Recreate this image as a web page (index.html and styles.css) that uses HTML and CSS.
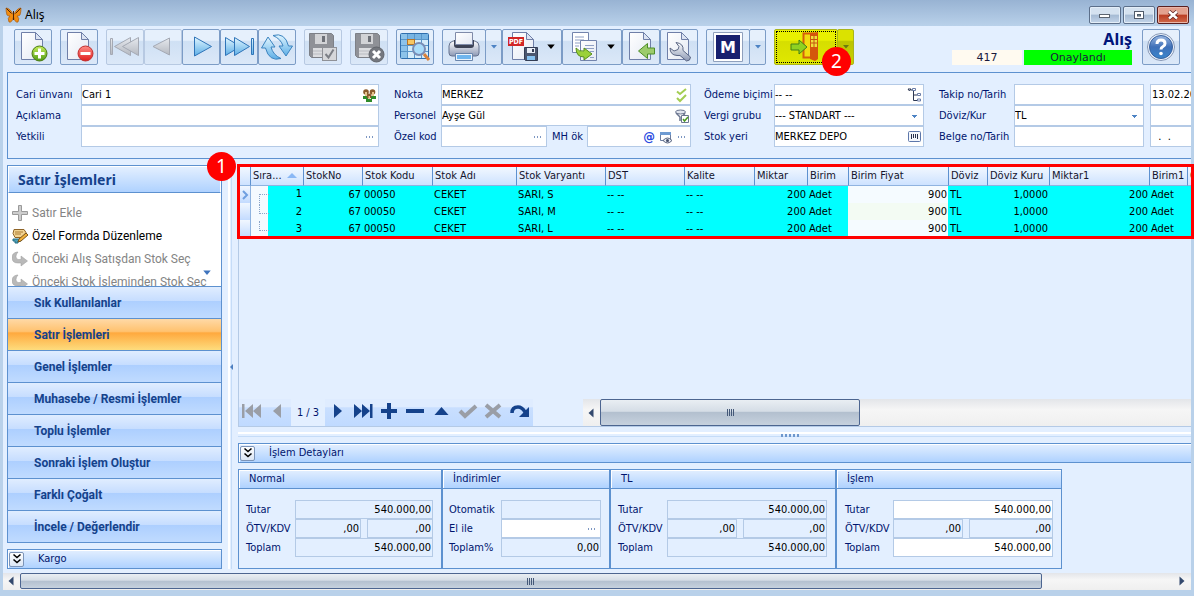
FILE: index.html
```html
<!DOCTYPE html>
<html lang="tr">
<head>
<meta charset="utf-8">
<title>Alış</title>
<link rel="stylesheet" href="styles.css">
</head>
<body>
<svg class="defs" aria-hidden="true">
  <defs>
    <linearGradient id="blue" x1="0" y1="0" x2="0" y2="1"><stop offset="0" stop-color="#e2f6ff"/><stop offset="1" stop-color="#5caee6"/></linearGradient>
    <linearGradient id="gray" x1="0" y1="0" x2="0" y2="1"><stop offset="0" stop-color="#e6e9ee"/><stop offset="1" stop-color="#b4b8c0"/></linearGradient>
    <linearGradient id="paper" x1="0" y1="0" x2="1" y2="1"><stop offset="0" stop-color="#fff"/><stop offset="1" stop-color="#e4e9f3"/></linearGradient>
    <linearGradient id="green" x1="0" y1="0" x2="0" y2="1"><stop offset="0" stop-color="#c6ee5a"/><stop offset="1" stop-color="#4e9a14"/></linearGradient>
    <linearGradient id="red" x1="0" y1="0" x2="0" y2="1"><stop offset="0" stop-color="#ff8d86"/><stop offset="1" stop-color="#e01c1c"/></linearGradient>
    <linearGradient id="steel" x1="0" y1="0" x2="0" y2="1"><stop offset="0" stop-color="#fff"/><stop offset="1" stop-color="#8c98b4"/></linearGradient>
    <linearGradient id="help" x1="0" y1="0" x2="0" y2="1"><stop offset="0" stop-color="#9bb8e2"/><stop offset=".5" stop-color="#3f70b8"/><stop offset="1" stop-color="#3a86cc"/></linearGradient>
    <symbol id="page" viewBox="0 0 32 32"><path d="M4.500 1.500h14l7 7v20h-21z" fill="url(#paper)" stroke="#6f7fa8"/><path d="M18.500 1.500v7h7z" fill="#dbe3f2" stroke="#6f7fa8"/></symbol>
    <symbol id="floppy" viewBox="0 0 32 32"><path d="M2.500 2.500h22l2 2v22h-22l-2-2z" fill="#8f9197" stroke="#7d8087"/><path d="M8 3h12v10H8z" fill="#d2d3d6"/><path d="M15 5h3v6h-3z" fill="#6d7077"/><path d="M6 17h16v9H6z" fill="#dcdde0"/><path d="M6 20h16M6 23h16" stroke="#b9bbc0"/></symbol>
    <symbol id="redo" viewBox="0 0 16 16"><path d="M5 1Q0 2 0 6.500 0 12 6 12h3v3l6.500-5L9 5v3.500H6.500Q4 8.500 4 5.500 4 3 6 1z" fill="#b9b9b9" stroke="#9a9a9a" stroke-width=".5"/></symbol>
    <symbol id="dots" viewBox="0 0 12 16"><path d="M2 7h1v2H2zM5 7h1v2H5zM8 7h1v2H8z" fill="#7d97c2"/></symbol>
    <symbol id="caret" viewBox="0 0 8 8"><path d="M1 2h6L4 5.500z" fill="currentColor"/></symbol>
    <symbol id="chevrons" viewBox="0 0 10 12"><path d="M1.500 1.500L5 4.500l3.500-3M1.500 6.500L5 9.500l3.500-3" fill="none" stroke="#000" stroke-width="1.600"/></symbol>
  </defs>
</svg>

<div class="window">
  <header class="titlebar">
    <svg class="logo" viewBox="0 0 18 16"><path d="M8.500 8Q5 1 1 1q0 4 1 7 1 1 3 1-3 2-1 6 3 1 4.500-5Q10 16 13 15q2-4-1-6 2 0 3-1 1-3 1-7-4 0-7.500 7z" fill="#f28c10" stroke="#a85a10" stroke-width=".7"/><path d="M8.500 4v9M1.500 1.500l5 5M15.500 1.500l-5 5" stroke="#4c2408"/></svg>
    <span class="titlebar-text">Alış</span>
    <div class="window-buttons">
      <button class="win-btn" type="button" aria-label="Simge durumuna küçült"><svg viewBox="0 0 14 12"><rect x="1.500" y="5.500" width="10" height="3" fill="#fff" stroke="#5b6470"/></svg></button>
      <button class="win-btn" type="button" aria-label="Ekranı kapla"><svg viewBox="0 0 14 12"><rect x="2.500" y="2.500" width="9" height="7" fill="#fff" stroke="#4f5a6a"/><rect x="5.500" y="5.500" width="3" height="1.500" fill="#8aa" stroke="#4f5a6a"/></svg></button>
      <button class="win-btn close" type="button" aria-label="Kapat"><svg viewBox="0 0 14 12"><path d="M3 2.500l8 7M11 2.500l-8 7" stroke="#5a2020" stroke-width="4"/><path d="M3 2.500l8 7M11 2.500l-8 7" stroke="#fff" stroke-width="2.500"/></svg></button>
    </div>
  </header>

  <div class="client">
    <div class="toolbar">
      <div class="group"><button class="tool" type="button" aria-label="Yeni"><svg viewBox="0 0 32 32"><use href="#page"/><circle cx="22.500" cy="22.500" r="7.500" fill="url(#green)" stroke="#4a7a14"/><path d="M22.500 17.500v10M17.500 22.500h10" stroke="#fff" stroke-width="3"/></svg></button></div>
      <div class="group"><button class="tool" type="button" aria-label="Sil"><svg viewBox="0 0 32 32"><use href="#page"/><circle cx="22.500" cy="22.500" r="7.500" fill="url(#red)" stroke="#c03030"/><path d="M17.500 22.500h10" stroke="#fff" stroke-width="3"/></svg></button></div>
      <div class="group">
        <button class="tool dim" type="button" aria-label="İlk kayıt"><svg viewBox="0 0 32 32"><g fill="url(#gray)" stroke="#a4a9b4"><path d="M1.500 7.500h2v16h-2z"/><path d="M21.500 6.500v18L5.500 15.500z"/><path d="M29.500 6.500v18L13.500 15.500z"/></g></svg></button>
        <button class="tool dim" type="button" aria-label="Önceki kayıt"><svg viewBox="0 0 32 32"><path d="M22.500 7v17L6 15.500z" fill="url(#gray)" stroke="#a4a9b4"/></svg></button>
        <button class="tool" type="button" aria-label="Sonraki kayıt"><svg viewBox="0 0 32 32"><path d="M9.500 6v19l17-9.500z" fill="url(#blue)" stroke="#2f74b8"/></svg></button>
        <button class="tool" type="button" aria-label="Son kayıt"><svg viewBox="0 0 32 32"><g fill="url(#blue)" stroke="#2f74b8"><path d="M2.500 6.500v18l15-9z"/><path d="M11.500 6.500v18l15-9z"/><path d="M28.500 7.500h2v16h-2z"/></g></svg></button>
        <button class="tool" type="button" aria-label="Yenile"><svg viewBox="0 0 32 32"><g fill="url(#blue)" stroke="#3b83bf"><path d="M12 4.500Q24 1 27.500 15h4l-6.500 10-7-10h4Q20 8 12 4.500z"/><path d="M20 27.500Q8 31 4.500 17h-4L7 6l7 10h-4q2 8 10 11.500z"/></g></svg></button>
      </div>
      <div class="group"><button class="tool dim" type="button" aria-label="Kaydet ve onayla"><svg viewBox="0 0 32 32"><use href="#floppy"/><rect x="15.500" y="16.500" width="14" height="13" fill="#d6d7da" stroke="#8f9197"/><path d="M18.500 23l3 3.500 5-8" fill="none" stroke="#7c7f86" stroke-width="2"/></svg></button></div>
      <div class="group"><button class="tool dim" type="button" aria-label="Kaydet ve kapat"><svg viewBox="0 0 32 32"><use href="#floppy"/><circle cx="23.500" cy="23.500" r="7.500" fill="#74777e" stroke="#62656c"/><path d="M20 20l7 7M27 20l-7 7" stroke="#fff" stroke-width="3"/></svg></button></div>
      <div class="group"><button class="tool" type="button" aria-label="Listele"><svg viewBox="0 0 32 32"><rect x="1.500" y="2.500" width="28" height="25" rx="1" fill="#d5ecfa" stroke="#2f6fae"/><path d="M2 3h27v5H2z" fill="#77b4e3"/><path d="M2 3h6v24H2z" fill="#8cc3ea"/><path d="M8.500 3v24M15.500 3v24M22.500 3v24M2 8.500h27M2 14.500h27M2 20.500h27" stroke="#5a96c9"/><rect x="8.500" y="8.500" width="7" height="5" fill="#f7c763" stroke="#b5742a"/><circle cx="20" cy="18" r="6" fill="#a8dcfb" stroke="#7a8db5" stroke-width="2"/><path d="M25 23l5 6" stroke="#d9823b" stroke-width="3"/></svg></button></div>
      <div class="group">
        <button class="tool wide" type="button" aria-label="Yazdır"><svg viewBox="0 0 32 32"><path d="M1 15q0-4 4-5h22q4 1 4 5v7q0 3-3 3H4q-3 0-3-3z" fill="url(#steel)" stroke="#65728f"/><path d="M6 9h20v5q0 3-3 3H9q-3 0-3-3z" fill="#3d4356"/><path d="M7.500 1.500h17v12h-17z" fill="url(#paper)" stroke="#7f8ba9"/><path d="M7.500 22.500h17v7h-17z" fill="#eaf3fc" stroke="#6a86ad"/><path d="M9 24h14v4H9z" fill="#6fb5ee"/></svg></button>
        <button class="tool drop blue" type="button" aria-label="Yazdır seçenekleri"><svg viewBox="0 0 8 8"><use href="#caret"/></svg></button>
        <button class="tool menu" type="button" aria-label="PDF kaydet"><svg viewBox="0 0 32 32"><use href="#page"/><path d="M0 6h16v9H0z" fill="#d12525"/><text x="1" y="13" class="pdf-text">PDF</text><path d="M16.500 16.500h13v13h-12l-1-1z" fill="#4a566f" stroke="#333d55"/><path d="M19 17h8v5h-8z" fill="#e8edf6"/><path d="M24 18h2v3h-2z" fill="#333d55"/><path d="M19 25h8v4h-8z" fill="#86c1f0"/></svg><svg class="menu-caret" viewBox="0 0 8 8"><use href="#caret"/></svg></button>
        <button class="tool menu" type="button" aria-label="Kopyala"><svg viewBox="0 0 32 32"><path d="M4.500 1.500h16v20h-16z" fill="#fff" stroke="#7384ad"/><path d="M7 6h9M7 9h9M7 12h6M7 15h4" stroke="#8fa0c4"/><path d="M12.500 9.500h16v20h-16z" fill="url(#paper)" stroke="#7384ad"/><path d="M17 14.500h9M17 17.500h9M22 20.500h4M22 26.500h4" stroke="#8fa0c4"/><path d="M8 17q3 4 8 3v-3l8 6-8 6v-3q-8 0-8-9z" fill="#9bd13a" stroke="#568e1c"/></svg><svg class="menu-caret" viewBox="0 0 8 8"><use href="#caret"/></svg></button>
        <button class="tool" type="button" aria-label="İçe aktar"><svg viewBox="0 0 32 32"><use href="#page"/><path d="M29.500 17h-7v-4.500L13.500 20l9 7.500V23h7z" fill="#9ccb6c" stroke="#4d8d28"/></svg></button>
        <button class="tool" type="button" aria-label="Ayarlar"><svg viewBox="0 0 32 32"><use href="#page"/><path d="M13 11.500l3 4-1 3-4 1.500-4-3q0 7 7 7.500h3l6.500 5.500q4 0 4-4L20 19.500q1-7-7-8z" fill="url(#steel)" stroke="#5b6785"/></svg></button>
      </div>
      <div class="group">
        <button class="tool wide" type="button" aria-label="Modül"><svg viewBox="0 0 32 32"><path d="M1.500 1.500h29v29h-29z" fill="#fff" stroke="#8fa0bd"/><path d="M4 4h24v24H4z" fill="#18206e"/><text x="16" y="22" text-anchor="middle" class="m-text">M</text></svg></button>
        <button class="tool drop blue" type="button" aria-label="Modül seçenekleri"><svg viewBox="0 0 8 8"><use href="#caret"/></svg></button>
      </div>
      <div class="group exit">
        <button class="tool exit-btn" type="button" aria-label="Çıkış"><svg viewBox="0 0 32 32"><path d="M13.500 2.500h9v24h-9z" fill="#f2dc10" stroke="#d4600c" stroke-width="2"/><path d="M20 2l8-1v27l-3 2-5-2z" fill="#d4560c"/><path d="M21 5h6v11h-6z" fill="#f0e03c"/><path d="M24 5v11M21 8.500h6M21 12h6" stroke="#c25310"/><path d="M1 13h8V9l8 7-8 7v-4H1z" fill="#8fd222" stroke="#428017"/></svg></button>
        <button class="tool drop exit-drop" type="button" aria-label="Çıkış seçenekleri"><svg viewBox="0 0 8 8"><use href="#caret"/></svg></button>
        <span class="badge badge-exit">2</span>
      </div>
      <div class="status">
        <strong class="status-title">Alış</strong>
        <div class="status-row"><span class="status-no">417</span><span class="status-state">Onaylandı</span></div>
      </div>
      <button class="tool help" type="button" aria-label="Yardım"><svg viewBox="0 0 32 32"><circle cx="16" cy="16" r="13.500" fill="#eef4fc" stroke="#8798b5"/><circle cx="16" cy="16" r="11.500" fill="url(#help)" stroke="#37619f"/><path d="M12 13q0-4 4-4t4 3.500q0 2-2 3t-2 3" fill="none" stroke="#fff" stroke-width="3"/><circle cx="16" cy="22.500" r="1.800" fill="#fff"/></svg></button>
    </div>

    <section class="form">
      <div class="fields col-account">
        <label for="cari">Cari ünvanı</label>
        <div class="field"><input id="cari" value="Cari 1"><button type="button" aria-label="Cari seç"><svg viewBox="0 0 16 16"><path d="M2 9h5v3H2zM10 9h5v3h-5zM5 12h6v3H5z" fill="#2e8b2a"/><g fill="#8a5a2c"><circle cx="5" cy="5" r="2.800"/><circle cx="11.500" cy="5" r="2.800"/><circle cx="8" cy="9" r="2.500"/></g><path d="M4 5h2v4H4zM11 5h2v4h-2zM7.500 9h1.500v3H7.500z" fill="#e6c48d"/></svg></button></div>
        <label for="aciklama">Açıklama</label>
        <div class="field"><input id="aciklama"></div>
        <label for="yetkili">Yetkili</label>
        <div class="field"><input id="yetkili"><button type="button" aria-label="Yetkili seç"><svg class="more" viewBox="0 0 12 16"><use href="#dots"/></svg></button></div>
      </div>
      <div class="fields col-place">
        <label for="nokta">Nokta</label>
        <div class="field"><input id="nokta" value="MERKEZ"><button type="button" aria-label="Nokta seç"><svg viewBox="0 0 16 16"><path d="M4 4.500l3 2.500 6-5M4 11l3 3 6-6" fill="none" stroke="#a3cd52" stroke-width="2"/></svg></button></div>
        <label for="personel">Personel</label>
        <div class="field"><input id="personel" value="Ayşe Gül"><button type="button" aria-label="Personel seç"><svg viewBox="0 0 16 16"><ellipse cx="7.500" cy="4" rx="5" ry="2" fill="#e2e6ef" stroke="#6b7690"/><path d="M3 5l4 4v4M12 5l-2 3" fill="none" stroke="#6b7690" stroke-width="1.500"/><path d="M8.500 7.500h7v7h-7z" fill="#fff" stroke="#6b7690"/><path d="M10 11l1.500 2L15 9" fill="none" stroke="#4b9a22" stroke-width="1.500"/></svg></button></div>
        <label for="ozelkod">Özel kod</label>
        <div class="split">
          <div class="field code"><input id="ozelkod"><button type="button" aria-label="Özel kod seç"><svg class="more" viewBox="0 0 12 16"><use href="#dots"/></svg></button></div>
          <label for="mhok">MH ök</label>
          <div class="field mh"><input id="mhok"><button class="at" type="button">@</button><button type="button" aria-label="Önizle"><svg viewBox="0 0 16 16"><path d="M2.500 3.500h10v8h-10z" fill="#fff" stroke="#6d7ea0"/><path d="M2 3h11v3H2z" fill="#6e9bd2"/><path d="M5 11.500q4.500-5 9 0-4.500 5-9 0z" fill="#e3e8f2" stroke="#59657f"/><circle cx="9.500" cy="11.500" r="1.500" fill="#44506b"/></svg></button><button type="button" aria-label="MH özel kod seç"><svg class="more" viewBox="0 0 12 16"><use href="#dots"/></svg></button></div>
        </div>
      </div>
      <div class="fields col-terms">
        <label for="odeme">Ödeme biçimi</label>
        <div class="field"><input id="odeme" value="-- --"><button type="button" aria-label="Ödeme biçimi seç"><svg viewBox="0 0 16 16"><path d="M2 2h3L3.500 4zM7.500 2v11.500H11M7.500 8H11M7.500 3H5" fill="none" stroke="#2c3752"/><path d="M6.500 1.500h3v2h-3zM11.500 6.500h3v2h-3zM11.500 12h3v2h-3z" fill="#fff" stroke="#6a7da8"/></svg></button></div>
        <label for="vergi">Vergi grubu</label>
        <div class="field"><select id="vergi"><option>--- STANDART ---</option></select></div>
        <label for="stokyeri">Stok yeri</label>
        <div class="field"><input id="stokyeri" value="MERKEZ DEPO"><button type="button" aria-label="Stok yeri seç"><svg viewBox="0 0 16 16"><rect x="2.500" y="2.500" width="12" height="10" rx="1" fill="#f4f7fc" stroke="#5d77ab"/><path d="M5.500 5v5M7.500 5v4M9.500 5v4M11.500 5v5" stroke="#26304c"/></svg></button></div>
      </div>
      <div class="fields col-track">
        <label for="takip">Takip no/Tarih</label>
        <div class="split"><div class="field main"><input id="takip"></div><div class="field"><input aria-label="Takip tarihi" value="13.02.2024" class="date"></div></div>
        <label for="doviz">Döviz/Kur</label>
        <div class="split"><div class="field main"><select id="doviz"><option>TL</option></select></div><div class="field"><input aria-label="Kur"></div></div>
        <label for="belge">Belge no/Tarih</label>
        <div class="split"><div class="field main"><input id="belge"></div><div class="field"><input aria-label="Belge tarihi" value="&nbsp;&nbsp;.&nbsp;&nbsp;." class="date"></div></div>
      </div>
    </section>

    <div class="workspace">
      <aside class="sidebar">
        <div class="sidebar-panel">
          <h2 class="sidebar-title">Satır İşlemleri</h2>
          <div class="actions">
            <button class="action off" type="button"><svg viewBox="0 0 16 16"><path d="M6.500.500h3v6h6v3h-6v6h-3v-6h-6v-3h6z" fill="#cdcdcd" stroke="#9a9a9a"/></svg>Satır Ekle</button>
            <button class="action" type="button"><svg viewBox="0 0 16 16"><path d="M2 1.500h10l2 3-3 5H3l-2-4z" fill="#f2d391" stroke="#8e6427"/><path d="M3 4h8M3 6h6" stroke="#a97a35"/><path d="M1 11h8v2H6v2H3v-2H1z" fill="#4aa0b8" stroke="#246f86"/><path d="M14 5l2 2-7 6-3 1 1-3z" fill="#f3b23a" stroke="#7a541c"/></svg>Özel Formda Düzenleme</button>
            <button class="action off" type="button"><svg viewBox="0 0 16 16"><use href="#redo"/></svg>Önceki Alış Satışdan Stok Seç</button>
            <button class="action off" type="button"><svg viewBox="0 0 16 16"><use href="#redo"/></svg>Önceki Stok İşleminden Stok Seç</button>
            <svg class="scroll-hint" viewBox="0 0 8 8"><use href="#caret"/></svg>
          </div>
          <nav class="nav">
            <button type="button">Sık Kullanılanlar</button>
            <button type="button" class="active">Satır İşlemleri</button>
            <button type="button">Genel İşlemler</button>
            <button type="button">Muhasebe / Resmi İşlemler</button>
            <button type="button">Toplu İşlemler</button>
            <button type="button">Sonraki İşlem Oluştur</button>
            <button type="button">Farklı Çoğalt</button>
            <button type="button">İncele / Değerlendir</button>
          </nav>
          <span class="badge badge-grid">1</span>
        </div>
        <div class="bar"><button class="expand" type="button" aria-label="Kargo bölümünü aç"><svg viewBox="0 0 10 12"><use href="#chevrons"/></svg></button><span>Kargo</span></div>
      </aside>
      <div class="vsplit"><svg viewBox="0 0 4 6"><path d="M4 0v6L1 3z" fill="#4d7fc0"/></svg></div>

      <main class="content">
        <section class="grid">
          <div class="grid-lines">
            <div class="grid-clip">
              <table>
                <colgroup><col class="w-ind"><col class="w-sira"><col class="w-no"><col class="w-kod"><col class="w-adi"><col class="w-var"><col class="w-dst"><col class="w-kal"><col class="w-mik"><col class="w-bir"><col class="w-fiyat"><col class="w-dov"><col class="w-kur"><col class="w-mik1"><col class="w-bir1"><col class="w-last"></colgroup>
                <thead><tr><th></th><th><span class="sorted">Sıra...<svg viewBox="0 0 10 6"><path d="M0 5h10L5 0z" fill="#8ab8f5"/></svg></span></th><th>StokNo</th><th>Stok Kodu</th><th>Stok Adı</th><th>Stok Varyantı</th><th>DST</th><th>Kalite</th><th>Miktar</th><th>Birim</th><th>Birim Fiyat</th><th>Döviz</th><th>Döviz Kuru</th><th>Miktar1</th><th>Birim1</th><th>Ö</th></tr></thead>
                <tbody>
                  <tr><td class="ind"><svg viewBox="0 0 8 10"><path d="M1 1l4 4-4 4" fill="none" stroke="#6f9fe0" stroke-width="2"/></svg></td><td class="tree first n">1</td><td class="n">67</td><td>00050</td><td>CEKET</td><td>SARI, S</td><td>-- --</td><td>-- --</td><td class="n">200</td><td>Adet</td><td class="n price">900</td><td>TL</td><td class="n">1,0000</td><td class="n">200</td><td>Adet</td><td></td></tr>
                  <tr><td class="ind"></td><td class="tree n">2</td><td class="n">67</td><td>00050</td><td>CEKET</td><td>SARI, M</td><td>-- --</td><td>-- --</td><td class="n">200</td><td>Adet</td><td class="n price alt">900</td><td>TL</td><td class="n">1,0000</td><td class="n">200</td><td>Adet</td><td></td></tr>
                  <tr><td class="ind"></td><td class="tree n">3</td><td class="n">67</td><td>00050</td><td>CEKET</td><td>SARI, L</td><td>-- --</td><td>-- --</td><td class="n">200</td><td>Adet</td><td class="n price">900</td><td>TL</td><td class="n">1,0000</td><td class="n">200</td><td>Adet</td><td></td></tr>
                </tbody>
              </table>
            </div>
            <div class="callout-frame"></div>
          </div>
          <div class="grid-foot">
            <div class="pager">
              <button type="button" class="dis" aria-label="İlk"><svg viewBox="0 0 20 16"><path d="M0 1h2.500v14H0zM11 1v14L3 8zM19 1v14L11 8z" fill="currentColor"/></svg></button>
              <button type="button" class="dis" aria-label="Önceki"><svg viewBox="0 0 20 16"><path d="M13 1v14L5 8z" fill="currentColor"/></svg></button>
              <span class="page-no">1 / 3</span>
              <button type="button" aria-label="Sonraki"><svg viewBox="0 0 20 16"><path d="M6 1v14l8-7z" fill="currentColor"/></svg></button>
              <button type="button" aria-label="Son"><svg viewBox="0 0 20 16"><path d="M16 1h2.500v14H16zM0 1v14l8-7zM8 1v14l8-7z" fill="currentColor"/></svg></button>
              <button type="button" aria-label="Ekle"><svg viewBox="0 0 20 16"><path d="M7 0h4v6h6v4h-6v6H7v-6H1V6h6z" fill="currentColor"/></svg></button>
              <button type="button" aria-label="Sil"><svg viewBox="0 0 20 16"><path d="M0 6h18v4H0z" fill="currentColor"/></svg></button>
              <button type="button" aria-label="Düzenle"><svg viewBox="0 0 20 16"><path d="M9.500 4l7 8h-14z" fill="currentColor"/></svg></button>
              <button type="button" class="dis" aria-label="Onayla"><svg viewBox="0 0 20 16"><path d="M2 8l5 5L18 3" fill="none" stroke="currentColor" stroke-width="4"/></svg></button>
              <button type="button" class="dis" aria-label="İptal"><svg viewBox="0 0 20 16"><path d="M2 2l14 12M16 2L2 14" stroke="currentColor" stroke-width="4"/></svg></button>
              <button type="button" aria-label="Yenile"><svg viewBox="0 0 20 16"><path d="M2 10q0-6 6-6 4 0 7 5" fill="none" stroke="currentColor" stroke-width="3.500"/><path d="M19 4v10H9z" fill="currentColor"/></svg></button>
            </div>
            <div class="scrollbar grid-scroll"><svg class="arrow" viewBox="0 0 8 10"><path d="M6.500.500v9L1.500 5z" fill="#33496e"/></svg><div class="thumb"><i></i><i></i><i></i><i></i></div></div>
          </div>
        </section>
        <div class="hsplit"><i></i><i></i><i></i><i></i><i></i></div>
        <div class="bar"><button class="expand" type="button" aria-label="İşlem detaylarını aç"><svg viewBox="0 0 10 12"><use href="#chevrons"/></svg></button><span>İşlem Detayları</span></div>
        <div class="totals">
          <section class="total normal"><h3>Normal</h3><div class="sums">
            <label for="n1">Tutar</label><div><input id="n1" readonly value="540.000,00"></div>
            <label for="n2">ÖTV/KDV</label><div class="pair"><input id="n2" readonly value=",00"><input aria-label="KDV" readonly value=",00"></div>
            <label for="n3">Toplam</label><div><input id="n3" readonly value="540.000,00"></div></div></section>
          <section class="total discounts"><h3>İndirimler</h3><div class="sums">
            <label for="i1">Otomatik</label><div><input id="i1" readonly></div>
            <label for="i2">El ile</label><div class="field small"><input id="i2"><button type="button" aria-label="İndirim seç"><svg class="more" viewBox="0 0 12 16"><use href="#dots"/></svg></button></div>
            <label for="i3">Toplam%</label><div><input id="i3" readonly value="0,00"></div></div></section>
          <section class="total tl"><h3>TL</h3><div class="sums">
            <label for="t1">Tutar</label><div><input id="t1" readonly value="540.000,00"></div>
            <label for="t2">ÖTV/KDV</label><div class="pair"><input id="t2" readonly value=",00"><input aria-label="KDV TL" readonly value=",00"></div>
            <label for="t3">Toplam</label><div><input id="t3" readonly value="540.000,00"></div></div></section>
          <section class="total deal"><h3>İşlem</h3><div class="sums">
            <label for="d1">Tutar</label><div><input id="d1" value="540.000,00"></div>
            <label for="d2">ÖTV/KDV</label><div class="pair"><input id="d2" readonly value=",00"><input aria-label="KDV işlem" readonly value=",00"></div>
            <label for="d3">Toplam</label><div><input id="d3" value="540.000,00"></div></div></section>
        </div>
      </main>
    </div>
    <div class="scrollbar page-scroll"><svg class="arrow" viewBox="0 0 8 10"><path d="M6.500.500v9L1.500 5z" fill="#33496e"/></svg><div class="thumb"><i></i><i></i><i></i><i></i></div><svg class="arrow end" viewBox="0 0 8 10"><path d="M1.500.500v9l5-4.500z" fill="#33496e"/></svg></div>
  </div>
</div>
</body>
</html>
```

FILE: styles.css
```css
* { box-sizing: border-box; }

:root {
  --line: #5d91cf;
  --soft: #b4cae6;
  --face: #e3efff;
  --ink: #00156e;
}

body {
  margin: 0;
  font-family: "DejaVu Sans Condensed", "DejaVu Sans", sans-serif;
  font-size: 11px;
  line-height: 14px;
  color: #000;
  overflow: hidden;
}

button, input, select { font: inherit; color: inherit; }
button { padding: 0; border: 0; background: none; }
svg { display: block; flex: none; }
.defs { position: absolute; width: 0; height: 0; }

.window {
  display: flex;
  flex-direction: column;
  height: 100vh;
  padding: 0 3px 6px;
  background: #b9d1ea;
}

.titlebar {
  display: flex;
  align-items: center;
  flex: none;
  height: 26px;
  margin: 0 -3px;
  padding: 3px 5px 0;
  background: linear-gradient(#98b3d3, #b9d1ea);
}
.logo { width: 18px; height: 16px; }
.titlebar-text { flex: 1; margin-left: 2px; font: 12px/16px "Noto Sans", sans-serif; }
.window-buttons { display: flex; gap: 2px; }
.win-btn {
  display: grid;
  place-items: center;
  width: 32px;
  height: 18px;
  border: 1px solid #5c6f8a;
  border-radius: 2px;
  background: linear-gradient(#d5e2f0 45%, #a5bad3 50%, #c3d5ea);
  box-shadow: inset 0 0 0 1px #e4eef8;
}
.win-btn svg { width: 14px; height: 12px; }
.win-btn.close {
  border-color: #5a1f1f;
  background: linear-gradient(#e3a18f 45%, #bb3c22 50%, #cf6a4c);
  box-shadow: inset 0 0 0 1px #eab7aa;
}

.client {
  display: flex;
  flex: 1;
  flex-direction: column;
  min-height: 0;
  background: var(--face);
}

/* toolbar */
.toolbar { display: flex; gap: 8px; flex: none; padding: 3px 11px 7px; }
.group { display: flex; }
.tool {
  display: flex;
  align-items: center;
  justify-content: center;
  width: 38px;
  height: 36px;
  border: 1px solid #7c9cc6;
  border-radius: 2px;
  background: linear-gradient(#e6f0fc 30%, #cfe0f4 34%, #dbe8f8);
}
.tool svg { width: 32px; height: 32px; }
.tool.dim { border-color: #b7c9e2; }
.tool.wide { width: 44px; margin-right: -1px; }
.tool.drop { width: 17px; }
.tool.drop svg { width: 8px; height: 8px; }
.tool.blue { color: #4d83c4; }
.tool.menu { width: 60px; gap: 6px; }
.tool .menu-caret { width: 10px; height: 10px; }
.pdf-text { font: bold 7px "DejaVu Sans Condensed", sans-serif; fill: #fff; }
.m-text { font: bold 16px "DejaVu Sans", sans-serif; fill: #fff; }
.exit { position: relative; }
.exit .tool { border-color: #a9b51c; background: linear-gradient(#e9f000 30%, #d6de00 34%, #e0e800); }
.exit .exit-btn { width: 64px; outline: 1px dotted #000; outline-offset: -3px; margin-right: -1px; }
.exit .exit-drop { width: 17px; color: #6a7a10; background: linear-gradient(#dbe200 30%, #bcc400 34%, #c8d000); }
.status { display: flex; flex-direction: column; align-items: flex-end; margin-left: auto; }
.status-title { font: bold 16px/21px "Noto Sans", sans-serif; color: #00147a; }
.status-row { display: flex; gap: 2px; line-height: 15px; text-align: center; color: #1a1a3c; font-family: "DejaVu Sans", sans-serif; }
.status-no { width: 70px; background: #fffaf0; }
.status-state { width: 108px; background: #00ff00; }
.help { margin-left: 2px; }

.badge {
  position: absolute;
  z-index: 2;
  width: 29px;
  height: 29px;
  border-radius: 50%;
  background: #f00;
  color: #fff;
  font: 19px/28px "Noto Sans", sans-serif;
  text-align: center;
}
.badge-exit { left: 48px; top: 18px; }
.badge-grid { right: -15px; top: -14px; }

/* document header form */
.form {
  display: flex;
  flex: none;
  margin-left: 4px;
  padding: 11px 0 11px 8px;
  border: 1px solid var(--line);
  border-right: 0;
  color: var(--ink);
  overflow: hidden;
}
.fields { display: grid; grid-auto-rows: 21px; align-items: center; flex: none; }
.col-account { grid-template-columns: 65px minmax(0, 1fr); width: 363px; margin-right: 15px; }
.col-place { grid-template-columns: 47px minmax(0, 1fr); width: 297px; margin-right: 13px; }
.col-terms { grid-template-columns: 70px minmax(0, 1fr); width: 220px; margin-right: 15px; }
.col-track { grid-template-columns: 75px minmax(0, 1fr); flex: 1 0 345px; }
.fields label { white-space: nowrap; }
.field {
  display: flex;
  align-items: center;
  flex: 1;
  min-width: 0;
  height: 21px;
  padding-right: 1px;
  border: 1px solid var(--soft);
  background: #fff;
}
.field input, .field select {
  flex: 1;
  width: 0;
  min-width: 0;
  height: 19px;
  padding: 0;
  border: 0;
  outline: 0;
  background: transparent;
  color: #000;
}
.field select {
  appearance: none;
  background: linear-gradient(#4d83c4, #4d83c4) no-repeat right 5px center / 5px 1px,
    linear-gradient(#4d83c4, #4d83c4) no-repeat right 6px top 10px / 3px 1px,
    linear-gradient(#4d83c4, #4d83c4) no-repeat right 7px top 11px / 1px 1px;
}
.field .date { padding-left: 1px; }
.field button svg { width: 16px; height: 16px; }
.field button .more { width: 12px; margin: 0 1px 0 2px; }
.field button { height: 16px; }
.field .at { width: 18px; font: bold 13px/16px "DejaVu Sans Condensed", sans-serif; color: #2849e0; }
.split { display: flex; align-items: center; }
.split label { margin: 0 5px; width: 30px; }
.field.code { flex: 1; }
.field.mh { flex: none; width: 104px; }
.col-track .split { gap: 6px; }
.field.main { flex: none; width: 130px; }

/* workspace */
.workspace { display: flex; flex: 1; min-height: 0; padding: 6px 0 4px 4px; }
.sidebar { display: flex; flex: none; flex-direction: column; gap: 6px; width: 215px; }
.sidebar-panel { position: relative; display: flex; flex: 1; flex-direction: column; min-height: 0; border: 1px solid var(--line); background: #fff; }
.sidebar-title {
  flex: none;
  margin: 0;
  padding: 0 9px;
  border: 1px solid #fff;
  border-bottom: 1px solid var(--line);
  background: linear-gradient(#e3efff, #afd2ff);
  font: bold 14px/25px "Noto Sans", sans-serif;
  color: #15428b;
}
.actions { position: relative; flex: 1; min-height: 0; overflow: hidden; padding: 8px 4px 0; }
.action { display: flex; align-items: center; gap: 4px; height: 23px; white-space: nowrap; font: 12px/16px Roboto, sans-serif; }
.action svg { width: 16px; height: 16px; }
.action.off { color: #848484; }
.scroll-hint { position: absolute; right: 9px; bottom: 8px; width: 10px; height: 10px; color: #3f74bd; }
.nav { flex: none; }
.nav button {
  display: block;
  width: 100%;
  height: 32px;
  padding-left: 26px;
  border-top: 1px solid var(--line);
  background: linear-gradient(#e0edff, #c6ddff 45%, #adcfff 46%, #c0dbff);
  font: bold 12px/16px Roboto, sans-serif;
  color: #15428b;
  text-align: left;
}
.nav .active { background: linear-gradient(#ffd9a6, #ffc26f 40%, #ffa93e 45%, #fddc7d); }
.bar {
  display: flex;
  align-items: center;
  flex: none;
  gap: 14px;
  height: 20px;
  padding-left: 1px;
  border: 1px solid var(--line);
  background: linear-gradient(#e3efff, #afd2ff);
  box-shadow: inset 1px 1px #fff;
  color: var(--ink);
}
.expand { display: grid; place-items: center; width: 15px; height: 15px; border: 1px solid #7c94b8; border-radius: 2px; background: linear-gradient(#fff, #dbe6f5); }
.expand svg { width: 10px; height: 12px; }
.vsplit { display: flex; align-items: center; justify-content: center; flex: none; width: 4px; margin: 0 6px; border-left: 2px solid #fff; border-right: 1px solid #c5dcf8; }
.vsplit svg { width: 4px; height: 6px; }
.content { display: flex; flex: 1; flex-direction: column; min-width: 0; }
.content .bar { border-right: 0; }

/* line grid */
.grid { display: flex; flex: 1; flex-direction: column; min-height: 0; border: solid var(--soft); border-width: 1px 0 1px 1px; }
.grid-lines { position: relative; padding-left: 1px; }
.grid-clip { overflow: hidden; }
.callout-frame { position: absolute; inset: -2px -3px -2px -2px; border: 3px solid #f00; }
table { table-layout: fixed; width: 980px; border-collapse: separate; border-spacing: 0; }
th, td { padding: 0 1px 0 2px; height: 17px; line-height: 16px; overflow: hidden; white-space: nowrap; text-align: left; font-weight: normal; }
th { height: 20px; padding-left: 2px; border-left: 1px solid var(--line); border-bottom: 1px solid #8fb3e0; background: linear-gradient(#f4f9ff, #cde2ff); color: #14142c; }
th:first-child { border-left: 0; }
td { background: #00ffff; }
td.n { text-align: right; padding-right: 1px; }
td.ind { background: linear-gradient(#f1f7ff, #c3dbff); }
td.ind svg { width: 8px; height: 10px; }
td.tree { background: linear-gradient(90deg, #f5faff 17px, #00ffff 17px); border-left: 1px solid #8fb3e0; }
td.price { background: #f5fbff; }
td.alt { background: #f3fbf3; }
td.tree::before { content: ""; float: left; width: 9px; height: 9px; margin-left: 6px; border-left: 1px dotted #8aa4c8; border-bottom: 1px dotted #8aa4c8; }
td.tree.first::before { height: 8px; margin-top: 8px; border-bottom: 0; border-top: 1px dotted #8aa4c8; }
.sorted { display: flex; align-items: center; justify-content: space-between; padding-right: 5px; }
.sorted svg { width: 10px; height: 6px; }
.w-ind { width: 10px; } .w-sira { width: 53px; } .w-no { width: 59px; } .w-kod { width: 70px; }
.w-adi { width: 84px; } .w-var { width: 89px; } .w-dst { width: 79px; } .w-kal { width: 70px; }
.w-mik { width: 53px; } .w-bir { width: 41px; } .w-fiyat { width: 100px; } .w-dov { width: 39px; }
.w-kur { width: 62px; } .w-mik1 { width: 100px; } .w-bir1 { width: 38px; } .w-last { width: 33px; }

.grid-foot { display: flex; gap: 50px; margin-top: auto; height: 27px; }
.pager { display: flex; align-items: center; background: linear-gradient(#dfecff 30%, #c9dfff 32%, #c0daff); color: #15428b; }
.pager button { width: 26px; height: 27px; padding: 0 3px 3px; }
.pager svg { width: 20px; height: 16px; }
.pager .dis { color: #9a9ea6; }
.page-no { width: 34px; line-height: 27px; text-align: center; background: var(--face); color: var(--ink); }

.scrollbar { display: flex; align-items: stretch; background: linear-gradient(#e3e5e9, #f6f6f6 40%, #efefef); }
.scrollbar .arrow { width: 8px; height: 10px; margin: auto 5px auto 4px; }
.thumb {
  display: flex;
  align-items: center;
  justify-content: center;
  gap: 1px;
  border: 1px solid #4c6590;
  border-radius: 2px;
  background: linear-gradient(#e9eef3, #d5dde6 45%, #b3c0cf 50%, #c6d1de);
}
.thumb i { width: 1px; height: 7px; background: #445878; }
.grid-scroll { flex: 1; }
.grid-scroll .thumb { width: 260px; }
.page-scroll { flex: none; height: 17px; padding-bottom: 1px; }
.page-scroll .thumb { width: 86%; }
.page-scroll .arrow.end { margin-left: auto; }

.hsplit { display: flex; align-items: center; justify-content: center; gap: 2px; height: 5px; flex: none; margin: 5px 0 6px; padding-left: 150px; border-top: 2px solid #fff; border-bottom: 1px solid #c5dcf8; }
.hsplit i { width: 2px; height: 3px; background: #6f98cd; }

/* totals */
.totals { display: flex; flex: none; margin-top: 6px; color: var(--ink); }
.total { border: 1px solid var(--line); height: 100px; }
.normal { width: 204px; } .discounts { width: 168px; } .tl, .deal { width: 226px; }
.total h3 { margin: 0; height: 19px; padding-left: 10px; border-bottom: 1px solid var(--line); background: linear-gradient(#e3efff, #afd2ff); box-shadow: inset 1px 1px #fff; font: inherit; line-height: 18px; }
.sums { display: grid; grid-template-columns: 49px minmax(0, 1fr); grid-auto-rows: 19px; align-items: center; padding: 11px 8px 0 7px; }
.discounts .sums { grid-template-columns: 52px minmax(0, 1fr); padding-left: 6px; }
.deal .sums { padding-left: 8px; grid-template-columns: 48px minmax(0, 1fr); }
.sums label { white-space: nowrap; }
.sums input { display: block; width: 100%; min-width: 0; height: 19px; padding: 0 1px; border: 1px solid var(--soft); outline: 0; background: #fff; color: #000; text-align: right; }
.sums input:read-only { background: var(--face); }
.sums .small { height: 19px; width: 100%; }
.sums .small input { height: 17px; border: 0; }
.pair { display: grid; grid-template-columns: 70px minmax(0, 1fr); gap: 6px; }
.normal .pair { grid-template-columns: 1fr 1fr; }
```
